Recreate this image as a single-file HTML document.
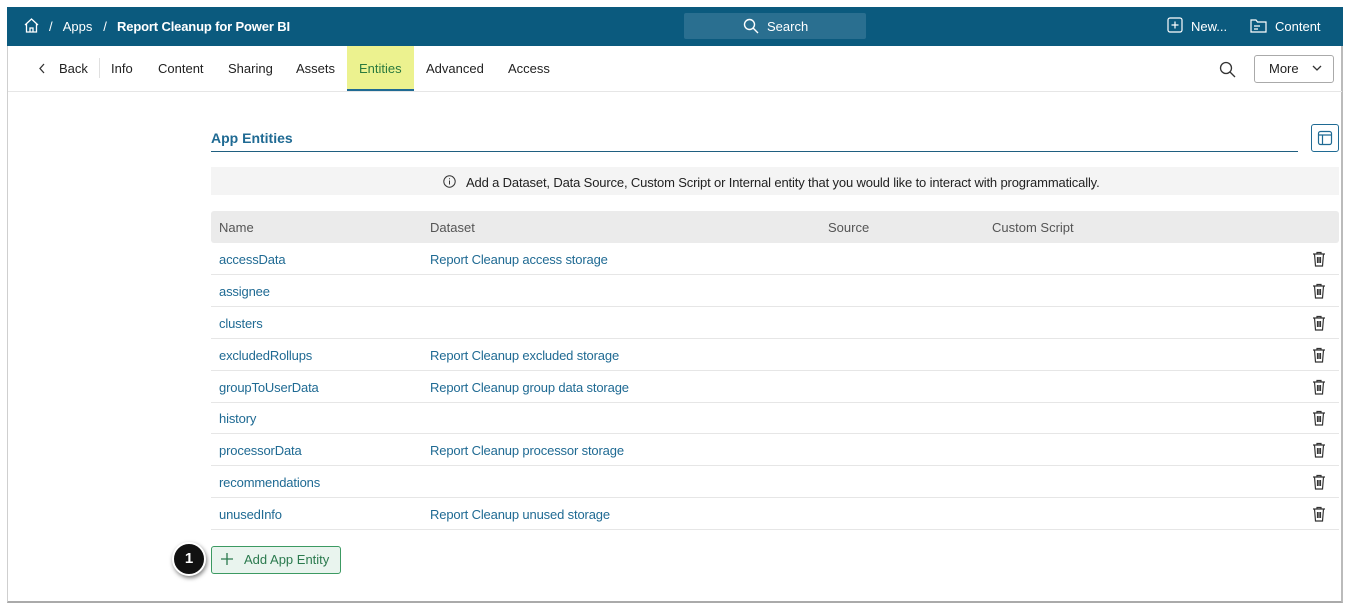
<!DOCTYPE html>
<html><head><style>
*{box-sizing:border-box;margin:0;padding:0}
body{width:1350px;height:605px;background:#fff;font-family:"Liberation Sans",sans-serif;font-size:13px;color:#222;position:relative;overflow:hidden}
.frame{position:absolute;left:7px;top:7px;width:1336px;height:596px;border:1px solid #cfcfcf;border-right:2px solid #bbb;border-bottom:2px solid #aaa}
.hdr{position:absolute;left:7px;top:7px;width:1336px;height:39px;background:#0b5a7e;color:#fff}
.abs{position:absolute}
.nav{position:absolute;top:46px;left:8px;width:1334px;height:46px;border-bottom:1px solid #e6e6e6}
.tab{position:absolute;top:15px;font-size:13px;color:#222}
.row{position:absolute;left:211px;width:1128px;height:32px;border-bottom:1px solid #e6e6e6}
.row span{position:absolute;top:9px;color:#1f6a93;letter-spacing:-0.15px}
.trash{position:absolute;right:13px;top:8px}
.t2{letter-spacing:-0.15px}
</style></head><body>
<div class="frame"></div>
<div class="hdr">
 <svg class="abs" style="left:16px;top:10px" width="17" height="17" viewBox="0 0 17 17" fill="none" stroke="#fff" stroke-width="1.3"><path d="M2 8L8.5 2 15 8M3.5 7v8h10V7M7 15v-4h3v4"/></svg>
 <div class="abs" style="left:42px;top:12px;font-size:13px">/&nbsp;&nbsp; Apps &nbsp;&nbsp;/</div>
 <div class="abs t2" style="left:110px;top:12px;font-size:13px;font-weight:bold">Report Cleanup for Power BI</div>
 <div class="abs" style="left:677px;top:6px;width:182px;height:26px;background:#2a6f90;border-radius:2px"></div>
 <svg class="abs" style="left:736px;top:11px" width="16" height="16" viewBox="0 0 16 16" fill="none" stroke="#fff" stroke-width="1.4"><circle cx="6.5" cy="6.5" r="5"/><path d="M10.3 10.3L15 15"/></svg>
 <div class="abs" style="left:760px;top:12px">Search</div>
 <svg class="abs" style="left:1160px;top:10px" width="16" height="16" viewBox="0 0 16 16" fill="none" stroke="#fff" stroke-width="1.2"><rect x="1" y="1" width="14" height="14" rx="2"/><path d="M8 4.5v7M4.5 8h7"/></svg>
 <div class="abs" style="left:1184px;top:12px">New...</div>
 <svg class="abs" style="left:1243px;top:10px" width="17" height="16" viewBox="0 0 17 16" fill="none" stroke="#fff" stroke-width="1.2"><path d="M1 3h5l1.5 2H16v10H1z"/><path d="M4 9h6M4 12h4"/></svg>
 <div class="abs" style="left:1268px;top:12px">Content</div>
</div>
<div class="nav">
 <svg class="abs" style="left:30px;top:17px" width="8" height="11" viewBox="0 0 8 11" fill="none" stroke="#333" stroke-width="1.3"><path d="M6 1L2 5.5 6 10"/></svg>
 <div class="tab" style="left:51px">Back</div>
 <div class="abs" style="left:91px;top:12px;width:1px;height:20px;background:#e0e0e0"></div>
 <div class="tab" style="left:103px">Info</div>
 <div class="tab" style="left:150px">Content</div>
 <div class="tab" style="left:220px">Sharing</div>
 <div class="tab" style="left:288px">Assets</div>
 <div class="abs" style="left:339px;top:0;width:67px;height:45px;background:#ecf28f;border-bottom:2px solid #1f6a93"></div>
 <div class="tab" style="left:351px;color:#2b7a3e">Entities</div>
 <div class="tab" style="left:418px">Advanced</div>
 <div class="tab" style="left:500px">Access</div>
 <svg class="abs" style="left:1211px;top:15px" width="17" height="17" viewBox="0 0 17 17" fill="none" stroke="#333" stroke-width="1.3"><circle cx="7" cy="7" r="5.5"/><path d="M11 11l5 5"/></svg>
 <div class="abs" style="left:1246px;top:9px;width:80px;height:28px;border:1px solid #aaa;border-radius:3px"></div>
 <div class="tab" style="left:1261px">More</div>
 <svg class="abs" style="left:1304px;top:19px" width="10" height="7" viewBox="0 0 10 7" fill="none" stroke="#333" stroke-width="1.3"><path d="M1 1l4 4 4-4"/></svg>
</div>
<div class="abs" style="left:211px;top:130px;font-size:14px;font-weight:bold;color:#1f6a93">App Entities</div>
<div class="abs" style="left:211px;top:151px;width:1087px;height:1px;background:#1f5f80"></div>
<div class="abs" style="left:1311px;top:124px;width:28px;height:28px;border:1px solid #1f6a93;border-radius:3px"></div>
<svg class="abs" style="left:1317px;top:130px" width="16" height="16" viewBox="0 0 16 16" fill="none" stroke="#1f6a93" stroke-width="1.2"><rect x="1.5" y="1.5" width="13" height="13" rx="2"/><path d="M1.5 5h13M5.5 5v9.5"/></svg>
<div class="abs" style="left:211px;top:167px;width:1128px;height:28px;background:#f4f4f4"></div>
<svg class="abs" style="left:443px;top:175px" width="13" height="13" viewBox="0 0 13 13" fill="none" stroke="#333" stroke-width="1"><circle cx="6.5" cy="6.5" r="5.7"/><path d="M6.5 5.5v4M6.5 3.3v1"/></svg>
<div class="abs t2" style="left:466px;top:175px">Add a Dataset, Data Source, Custom Script or Internal entity that you would like to interact with programmatically.</div>
<div class="abs" style="left:211px;top:211px;width:1128px;height:32px;background:#ebebeb;border-radius:3px;color:#555">
 <span class="abs" style="left:8px;top:9px">Name</span><span class="abs" style="left:219px;top:9px">Dataset</span><span class="abs" style="left:617px;top:9px">Source</span><span class="abs" style="left:781px;top:9px">Custom Script</span>
</div>
<div class="row" style="top:243px"><span style="left:8px">accessData</span><span style="left:219px">Report Cleanup access storage</span><svg class="trash" width="14" height="16" viewBox="0 0 14 16" fill="none" stroke="#333" stroke-width="1.2"><path d="M1 3h12M5 3V1.5h4V3M2.5 3l1 12h7l1-12M5.5 6v6M7 6v6M8.5 6v6"/></svg></div>
<div class="row" style="top:275px"><span style="left:8px">assignee</span><svg class="trash" width="14" height="16" viewBox="0 0 14 16" fill="none" stroke="#333" stroke-width="1.2"><path d="M1 3h12M5 3V1.5h4V3M2.5 3l1 12h7l1-12M5.5 6v6M7 6v6M8.5 6v6"/></svg></div>
<div class="row" style="top:307px"><span style="left:8px">clusters</span><svg class="trash" width="14" height="16" viewBox="0 0 14 16" fill="none" stroke="#333" stroke-width="1.2"><path d="M1 3h12M5 3V1.5h4V3M2.5 3l1 12h7l1-12M5.5 6v6M7 6v6M8.5 6v6"/></svg></div>
<div class="row" style="top:339px"><span style="left:8px">excludedRollups</span><span style="left:219px">Report Cleanup excluded storage</span><svg class="trash" width="14" height="16" viewBox="0 0 14 16" fill="none" stroke="#333" stroke-width="1.2"><path d="M1 3h12M5 3V1.5h4V3M2.5 3l1 12h7l1-12M5.5 6v6M7 6v6M8.5 6v6"/></svg></div>
<div class="row" style="top:371px"><span style="left:8px">groupToUserData</span><span style="left:219px">Report Cleanup group data storage</span><svg class="trash" width="14" height="16" viewBox="0 0 14 16" fill="none" stroke="#333" stroke-width="1.2"><path d="M1 3h12M5 3V1.5h4V3M2.5 3l1 12h7l1-12M5.5 6v6M7 6v6M8.5 6v6"/></svg></div>
<div class="row" style="top:402px"><span style="left:8px">history</span><svg class="trash" width="14" height="16" viewBox="0 0 14 16" fill="none" stroke="#333" stroke-width="1.2"><path d="M1 3h12M5 3V1.5h4V3M2.5 3l1 12h7l1-12M5.5 6v6M7 6v6M8.5 6v6"/></svg></div>
<div class="row" style="top:434px"><span style="left:8px">processorData</span><span style="left:219px">Report Cleanup processor storage</span><svg class="trash" width="14" height="16" viewBox="0 0 14 16" fill="none" stroke="#333" stroke-width="1.2"><path d="M1 3h12M5 3V1.5h4V3M2.5 3l1 12h7l1-12M5.5 6v6M7 6v6M8.5 6v6"/></svg></div>
<div class="row" style="top:466px"><span style="left:8px">recommendations</span><svg class="trash" width="14" height="16" viewBox="0 0 14 16" fill="none" stroke="#333" stroke-width="1.2"><path d="M1 3h12M5 3V1.5h4V3M2.5 3l1 12h7l1-12M5.5 6v6M7 6v6M8.5 6v6"/></svg></div>
<div class="row" style="top:498px"><span style="left:8px">unusedInfo</span><span style="left:219px">Report Cleanup unused storage</span><svg class="trash" width="14" height="16" viewBox="0 0 14 16" fill="none" stroke="#333" stroke-width="1.2"><path d="M1 3h12M5 3V1.5h4V3M2.5 3l1 12h7l1-12M5.5 6v6M7 6v6M8.5 6v6"/></svg></div>
<div class="abs" style="left:211px;top:546px;width:130px;height:28px;background:#e9f4ee;border:1px solid #3c9a62;border-radius:3px"></div>
<svg class="abs" style="left:221px;top:553px" width="12" height="12" viewBox="0 0 12 12" fill="none" stroke="#2b7a4e" stroke-width="1.3"><path d="M6 0v12M0 6h12"/></svg>
<div class="abs" style="left:244px;top:552px;color:#2b7a4e">Add App Entity</div>
<div class="abs" style="left:172px;top:542px;width:34px;height:34px;border-radius:50%;background:#111;border:2px solid #fff;box-shadow:1px 2px 4px rgba(0,0,0,.5);color:#fff;font-weight:bold;font-size:15px;text-align:center;line-height:30px">1</div>
</body></html>
